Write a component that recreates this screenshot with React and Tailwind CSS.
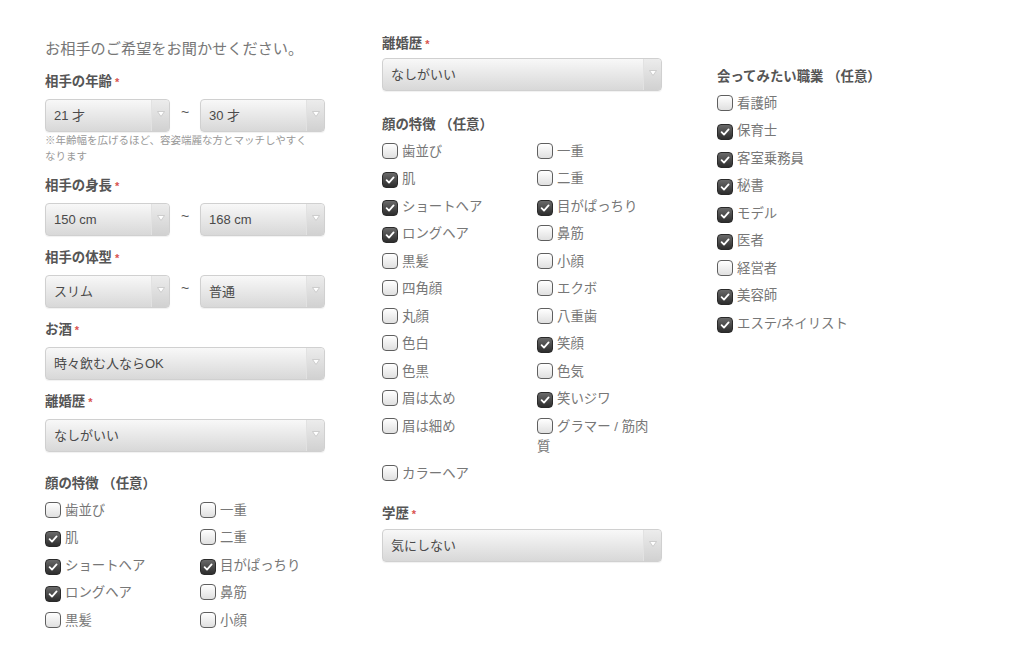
import React from "react";

const FONT = "font-['Liberation_Sans','Noto_Sans_CJK_JP',sans-serif]";

const Arrow = () => (
  <svg width="8" height="6" viewBox="0 0 8 6">
    <polygon points="0.5,0.5 7.5,0.5 4,5.5" fill="#ffffff" stroke="#c4c4c4" strokeWidth="0.8" />
  </svg>
);

const Select = ({ value, wide }) => (
  <div
    className={`flex h-[33px] rounded-[4px] border border-[#d0d0d0] bg-linear-to-b from-[#f8f8f8] to-[#d8d8d8] shadow-[0_1px_1px_rgba(0,0,0,0.06)] ${
      wide ? "w-[280px]" : "w-[125px]"
    }`}
  >
    <span className="flex-1 pl-[8px] text-[13px] leading-[31px] text-[#4a4a4a]">{value}</span>
    <span className="flex w-[18px] items-start justify-center rounded-r-[4px] border-l border-[#e2e2e2] bg-linear-to-b from-[#ececec] to-[#d1d1d1] pt-[11px]">
      <Arrow />
    </span>
  </div>
);

const Label = ({ children, required, className = "" }) => (
  <div className={`text-[13.4px] font-bold leading-[20px] text-[#555] ${className}`}>
    {children}
    {required && <span className="ml-[3px] text-[11px] text-[#d9534f]">*</span>}
  </div>
);

const Box = ({ checked }) =>
  checked ? (
    <span className="mr-[4px] inline-flex h-[16px] w-[16px] items-center justify-center rounded-[4px] border border-[#2a2a2a] bg-linear-to-b from-[#6a6a6a] to-[#2d2d2d] align-[-3px]">
      <svg width="12" height="12" viewBox="0 0 12 12">
        <path d="M2.6 6.2 L5 8.6 L9.6 3.4" fill="none" stroke="#fff" strokeWidth="1.8" strokeLinecap="round" strokeLinejoin="round" />
      </svg>
    </span>
  ) : (
    <span className="mr-[4px] inline-block h-[16px] w-[16px] rounded-[4px] border border-[#5f5f5f] bg-linear-to-b from-[#ffffff] to-[#e0e0e0] align-[-3px]" />
  );

const CheckRow = ({ text, checked }) => (
  <div className="py-[3.75px] text-[13.4px] leading-[20px] text-[#777]">
    <Box checked={checked} />
    {text}
  </div>
);

const CheckGrid = ({ items }) => (
  <div className="grid grid-cols-[155px_118px] pt-[3px]">
    {items.map(([text, checked]) => (
      <CheckRow key={text} text={text} checked={checked} />
    ))}
  </div>
);

const Range = ({ from, to }) => (
  <div className="mt-[7px] flex items-start">
    <Select value={from} />
    <span className="w-[30px] pt-[3px] text-center text-[14px] text-[#555]">~</span>
    <Select value={to} />
  </div>
);

const faceShort = [
  ["歯並び", false], ["一重", false],
  ["肌", true], ["二重", false],
  ["ショートヘア", true], ["目がぱっちり", true],
  ["ロングヘア", true], ["鼻筋", false],
  ["黒髪", false], ["小顔", false],
];

const faceFull = [
  ...faceShort,
  ["四角顔", false], ["エクボ", false],
  ["丸顔", false], ["八重歯", false],
  ["色白", false], ["笑顔", true],
  ["色黒", false], ["色気", false],
  ["眉は太め", false], ["笑いジワ", true],
  ["眉は細め", false], ["グラマー / 筋肉質", false],
  ["カラーヘア", false],
];

const jobs = [
  ["看護師", false],
  ["保育士", true],
  ["客室乗務員", true],
  ["秘書", true],
  ["モデル", true],
  ["医者", true],
  ["経営者", false],
  ["美容師", true],
  ["エステ/ネイリスト", true],
];

export default function App() {
  return (
    <div className={`flex h-[657px] w-[1024px] overflow-hidden bg-white pl-[45px] ${FONT}`}>
      {/* left column */}
      <div className="w-[280px] pt-[37px]">
        <div className="text-[15.2px] leading-[24px] text-[#777]">お相手のご希望をお聞かせください。</div>

        <Label required className="mt-[11px]">相手の年齢</Label>
        <Range from="21 才" to="30 才" />
        <div className="w-[272px] text-[10.5px] leading-[16px] text-[#999]">
          ※年齢幅を広げるほど、容姿端麗な方とマッチしやすくなります
        </div>

        <Label required className="mt-[12px]">相手の身長</Label>
        <Range from="150 cm" to="168 cm" />

        <Label required className="mt-[12px]">相手の体型</Label>
        <Range from="スリム" to="普通" />

        <Label required className="mt-[12px]">お酒</Label>
        <div className="mt-[7px]">
          <Select wide value="時々飲む人ならOK" />
        </div>

        <Label required className="mt-[12px]">離婚歴</Label>
        <div className="mt-[7px]">
          <Select wide value="なしがいい" />
        </div>

        <Label className="mt-[22px]">顔の特徴 （任意）</Label>
        <CheckGrid items={faceShort} />
      </div>

      {/* middle column */}
      <div className="ml-[57px] w-[280px] pt-[34px]">
        <Label required>離婚歴</Label>
        <div className="mt-[4px]">
          <Select wide value="なしがいい" />
        </div>

        <Label className="mt-[24px]">顔の特徴 （任意）</Label>
        <CheckGrid items={faceFull} />

        <Label required className="mt-[16px]">学歴</Label>
        <div className="mt-[5px]">
          <Select wide value="気にしない" />
        </div>
      </div>

      {/* right column */}
      <div className="ml-[55px] w-[220px] pt-[67px]">
        <Label>会ってみたい職業 （任意）</Label>
        <div className="pt-[3px]">
          {jobs.map(([text, checked]) => (
            <CheckRow key={text} text={text} checked={checked} />
          ))}
        </div>
      </div>
    </div>
  );
}
